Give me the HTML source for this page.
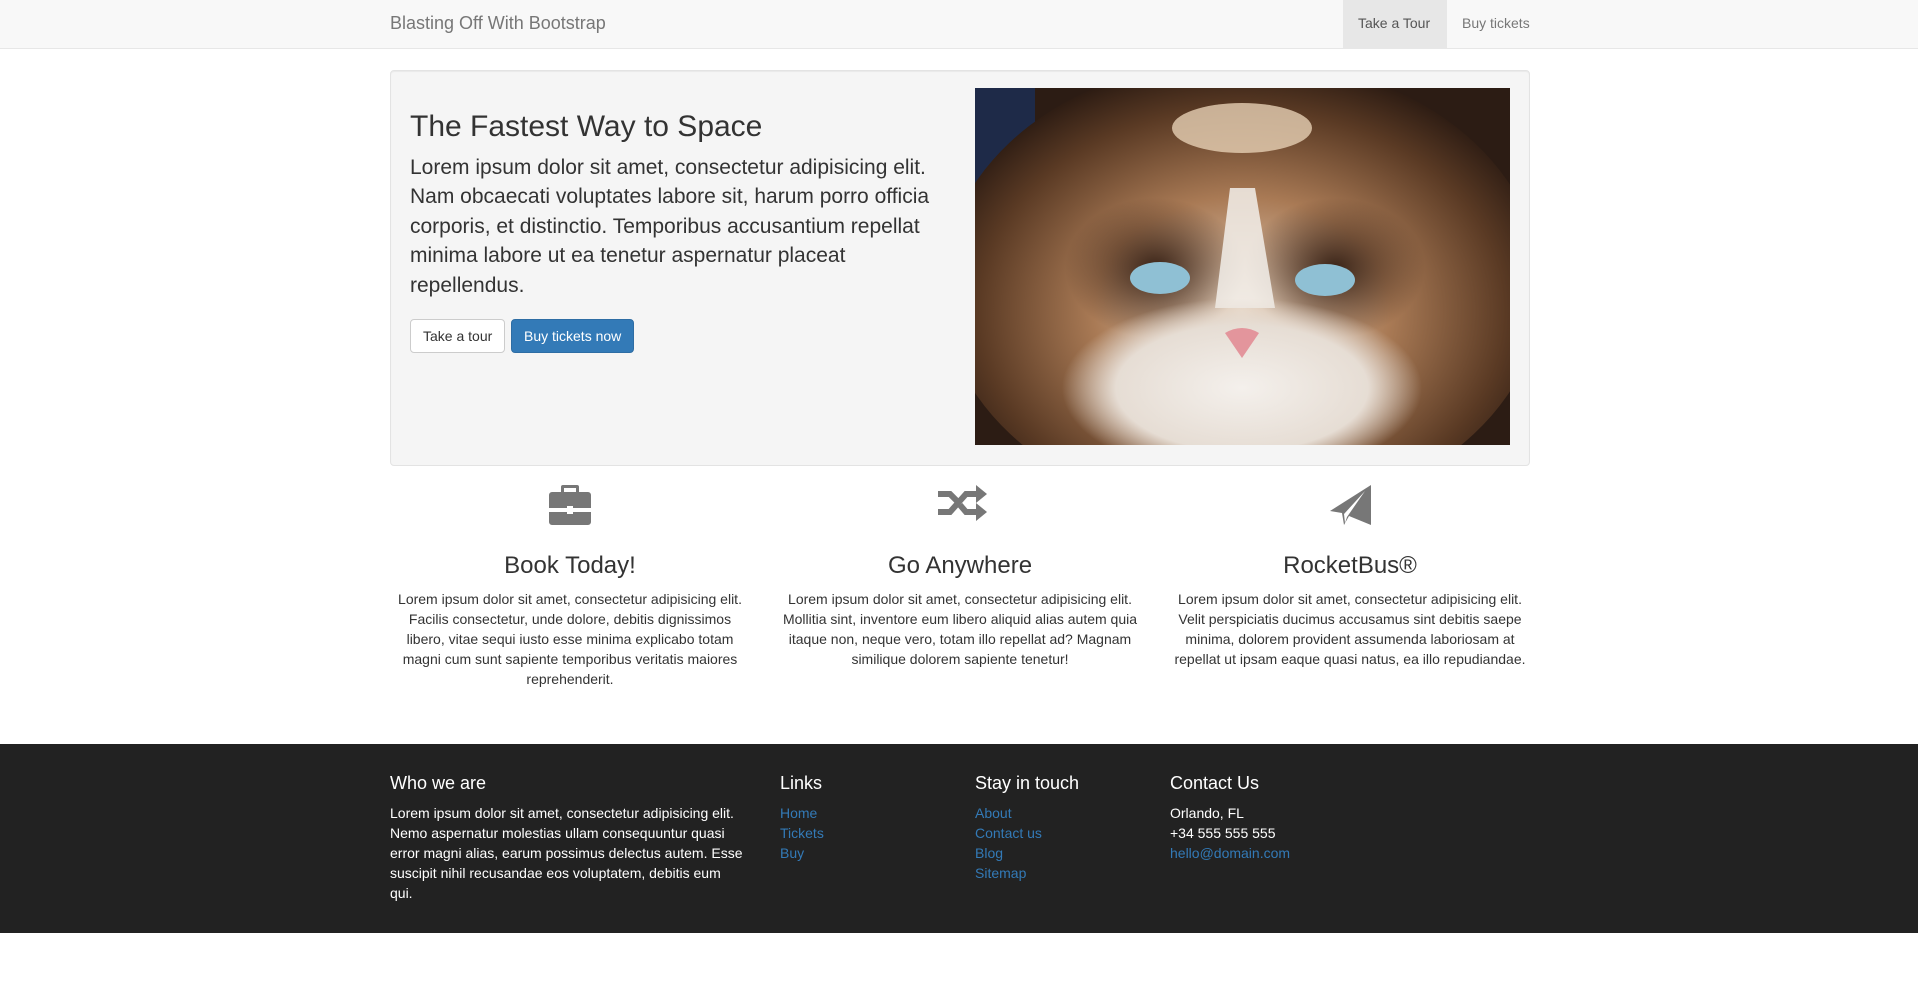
<!DOCTYPE html>
<html><head><meta charset="utf-8"><style>
*{box-sizing:border-box;margin:0;padding:0}
body{width:1918px;height:1006px;background:#fff;font-family:"Liberation Sans",Arial,sans-serif;font-size:14px;line-height:20px;color:#333;position:relative;overflow:hidden}
.abs{position:absolute}
.nav{left:0;top:0;width:1918px;height:49px;background:#f8f8f8;border-bottom:1px solid #e7e7e7}
.brand{left:390px;top:13px;font-size:18px;color:#777;line-height:20px}
.nl{top:0;height:48px;line-height:46px;color:#777;font-size:14px;padding:0 15px}
.well{left:390px;top:70px;width:1140px;height:396px;background:#f5f5f5;border:1px solid #e3e3e3;border-radius:4px;box-shadow:inset 0 1px 1px rgba(0,0,0,.05)}
h1{position:absolute;left:410px;top:107px;font-size:30px;font-weight:500;line-height:40px;color:#333}
.lead{left:410px;top:153px;width:545px;font-size:21px;line-height:29.4px;color:#333}
.btn{top:319px;height:34px;line-height:32px;font-size:14px;padding:0 12px;border-radius:4px;border:1px solid #ccc;background:#fff;color:#333}
.btnp{background:#337ab7;border-color:#2e6da4;color:#fff}
.feat{text-align:center}
.feat h3{font-size:24px;font-weight:500;line-height:26px;color:#333;margin-bottom:10px}
.foot{left:0;top:744px;width:1918px;height:189px;background:#222;color:#fff}
.fh{font-size:18px;line-height:20px;color:#fff;font-weight:500}
.ft a{color:#337ab7;text-decoration:none;display:block}
</style></head><body>
<div class="abs nav"></div>
<div class="abs brand">Blasting Off With Bootstrap</div>
<div class="abs nl" style="left:1343px;width:104px;background:#e7e7e7;color:#555">Take a Tour</div>
<div class="abs nl" style="left:1447px">Buy tickets</div>

<div class="abs well"></div>
<h1>The Fastest Way to Space</h1>
<div class="abs lead">Lorem ipsum dolor sit amet, consectetur adipisicing elit. Nam obcaecati voluptates labore sit, harum porro officia corporis, et distinctio. Temporibus accusantium repellat minima labore ut ea tenetur aspernatur placeat repellendus.</div>
<div class="abs btn" style="left:410px">Take a tour</div>
<div class="abs btn btnp" style="left:511px">Buy tickets now</div>

<svg class="abs" style="left:975px;top:88px" width="535" height="357" viewBox="0 0 535 357">
<defs>
<radialGradient id="f" cx="0.5" cy="0.55" r="0.55"><stop offset="0" stop-color="#e8d6c4"/><stop offset="0.45" stop-color="#a97a55"/><stop offset="0.8" stop-color="#5a3a24"/><stop offset="1" stop-color="#2a1a12"/></radialGradient>
<radialGradient id="w" cx="0.5" cy="0.5" r="0.5"><stop offset="0" stop-color="#f4f0ec"/><stop offset="0.7" stop-color="#e6ddd4"/><stop offset="1" stop-color="#e6ddd4" stop-opacity="0"/></radialGradient>
<radialGradient id="d" cx="0.5" cy="0.5" r="0.5"><stop offset="0" stop-color="#3a2418"/><stop offset="1" stop-color="#3a2418" stop-opacity="0"/></radialGradient>
</defs>
<rect width="535" height="357" fill="#2c1c14"/>
<rect width="60" height="200" fill="#1e2a48"/>
<ellipse cx="267" cy="200" rx="300" ry="230" fill="url(#f)"/>
<ellipse cx="180" cy="180" rx="90" ry="70" fill="url(#d)"/>
<ellipse cx="360" cy="180" rx="90" ry="70" fill="url(#d)"/>
<ellipse cx="267" cy="40" rx="70" ry="25" fill="#e6cfb4" opacity=".8"/>
<path d="M255 100 L280 100 L300 220 L240 220Z" fill="#f2eeea" opacity=".85"/>
<ellipse cx="267" cy="300" rx="180" ry="90" fill="url(#w)"/>
<ellipse cx="185" cy="190" rx="30" ry="16" fill="#8fc0d4"/>
<ellipse cx="350" cy="192" rx="30" ry="16" fill="#8fc0d4"/>
<path d="M250 245 Q267 235 284 245 L267 270Z" fill="#e3959c"/>
</svg>

<svg class="abs" style="left:549px;top:485px" width="42" height="40" viewBox="0 0 42 40">
<path fill="#777" d="M14 0h14a2 2 0 0 1 2 2v5h-3V3H15v4h-3V2a2 2 0 0 1 2-2zM3 7h36a3 3 0 0 1 3 3v13H24v-2h-6v2H0V10a3 3 0 0 1 3-3zM0 27h18v2h6v-2h18v10a3 3 0 0 1-3 3H3a3 3 0 0 1-3-3z"/>
</svg>
<svg class="abs" style="left:938px;top:485px" width="50" height="36" viewBox="0 0 50 36">
<g fill="none" stroke="#777" stroke-width="6"><polyline points="0,9 12,9 19,16"/><polyline points="0,27 12,27 28,9 39,9"/><polyline points="22,20 28,27 39,27"/></g>
<path fill="#777" d="M38 0L49 9 38 18zM38 18L49 27 38 36z"/>
</svg>
<svg class="abs" style="left:1330px;top:485px" width="41" height="40" viewBox="0 0 41 40">
<path fill="#777" d="M41 0L0 26l12 2 2 12 5-9 22 9zM14 29L35 6 17 32l-2 6z"/>
</svg>

<div class="abs feat" style="left:395px;width:350px;top:553px"><h3>Book Today!</h3><p>Lorem ipsum dolor sit amet, consectetur adipisicing elit. Facilis consectetur, unde dolore, debitis dignissimos libero, vitae sequi iusto esse minima explicabo totam magni cum sunt sapiente temporibus veritatis maiores reprehenderit.</p></div>
<div class="abs feat" style="left:778px;width:364px;top:553px"><h3>Go Anywhere</h3><p>Lorem ipsum dolor sit amet, consectetur adipisicing elit. Mollitia sint, inventore eum libero aliquid alias autem quia itaque non, neque vero, totam illo repellat ad? Magnam similique dolorem sapiente tenetur!</p></div>
<div class="abs feat" style="left:1166px;width:368px;top:553px"><h3>RocketBus®</h3><p>Lorem ipsum dolor sit amet, consectetur adipisicing elit. Velit perspiciatis ducimus accusamus sint debitis saepe minima, dolorem provident assumenda laboriosam at repellat ut ipsam eaque quasi natus, ea illo repudiandae.</p></div>

<div class="abs foot"></div>
<div class="abs ft" style="left:390px;top:773px;width:355px;color:#fff"><div class="fh">Who we are</div><p style="margin-top:10px">Lorem ipsum dolor sit amet, consectetur adipisicing elit. Nemo aspernatur molestias ullam consequuntur quasi error magni alias, earum possimus delectus autem. Esse suscipit nihil recusandae eos voluptatem, debitis eum qui.</p></div>
<div class="abs ft" style="left:780px;top:773px"><div class="fh">Links</div><div style="margin-top:10px"><a>Home</a><a>Tickets</a><a>Buy</a></div></div>
<div class="abs ft" style="left:975px;top:773px"><div class="fh">Stay in touch</div><div style="margin-top:10px"><a>About</a><a>Contact us</a><a>Blog</a><a>Sitemap</a></div></div>
<div class="abs ft" style="left:1170px;top:773px;color:#fff"><div class="fh">Contact Us</div><div style="margin-top:10px">Orlando, FL<br>+34 555 555 555<a>hello@domain.com</a></div></div>
</body></html>
